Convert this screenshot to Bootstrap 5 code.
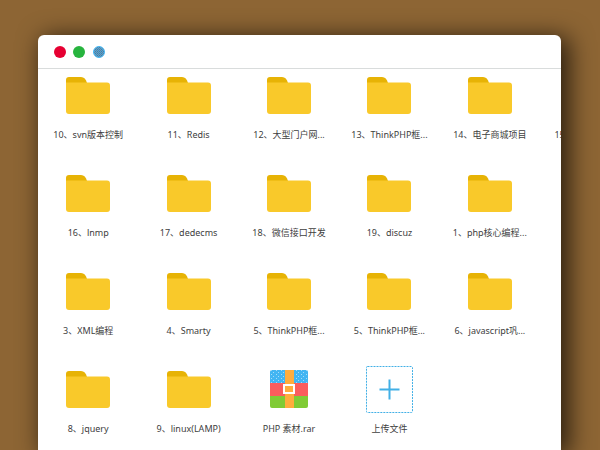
<!DOCTYPE html>
<html lang="zh-CN">
<head>
<meta charset="utf-8">
<meta name="viewport" content="width=device-width, initial-scale=1">
<title>PHP 素材</title>
<link href="https://cdn.jsdelivr.net/npm/bootstrap@5.3.0/dist/css/bootstrap.min.css" rel="stylesheet">
<style>
body { background: #8d6534; color: #404040; font-family: "Noto Sans", "Noto Sans CJK SC", sans-serif; font-size: 9px; line-height: 14px; }
.desk { padding: 35px 39px 0 38px; }
.win { border-radius: 6px 6px 0 0; box-shadow: 6px 4px 24px 2px rgba(0, 0, 0, .7); }
.titlebar { height: 34px; padding-left: 16px; gap: 7px; border-bottom: 1px solid #d9dcdc; }
.dot { width: 12px; height: 12px; border-radius: 50%; background: #e60032; }
.dot-green { background: #27b43e; }
.dot-blue { background: conic-gradient(#5d7590 25%, #42a9e0 0 50%, #6f7f92 0 75%, #42a9e0 0) 0 0 / 2px 2px; border: 1px solid #42b3f0; margin-left: 1px; }
.files { padding-top: 1px; }
.file-row { height: 98px; }
.tile { flex: 0 0 19.2%; color: inherit; font-size: 9px; line-height: 14px; }
.pic { height: 50px; }
.pic svg { display: block; }
</style>
<script src="https://cdn.jsdelivr.net/npm/bootstrap@5.3.0/dist/js/bootstrap.bundle.min.js"></script>
</head>
<body class="vh-100 overflow-hidden">
<svg class="d-none" aria-hidden="true">
  <symbol id="folder" viewBox="0 0 44 37">
    <path fill="#e7b305" d="M0 14V3a3 3 0 0 1 3-3h12c3 0 5 2 6 6v8z"/>
    <path fill="#f9c92a" d="M0 5.500h41a3 3 0 0 1 3 3V34a3 3 0 0 1-3 3H3a3 3 0 0 1-3-3z"/>
  </symbol>
</svg>
<main class="desk d-flex flex-column h-100">
  <section class="win bg-white flex-grow-1 overflow-hidden d-flex flex-column">
    <header class="titlebar d-flex align-items-center flex-shrink-0">
      <button type="button" class="dot border-0 p-0" aria-label="关闭"></button>
      <button type="button" class="dot dot-green border-0 p-0" aria-label="最大化"></button>
      <button type="button" class="dot dot-blue p-0" aria-label="最小化"></button>
    </header>
    <div class="files">
      <div class="file-row d-flex">
        <a href="#" class="tile text-decoration-none text-center text-nowrap"><span class="pic d-flex justify-content-center align-items-center"><svg width="44" height="37"><use href="#folder"/></svg></span><span class="d-block pt-2">10、svn版本控制</span></a>
        <a href="#" class="tile text-decoration-none text-center text-nowrap"><span class="pic d-flex justify-content-center align-items-center"><svg width="44" height="37"><use href="#folder"/></svg></span><span class="d-block pt-2">11、Redis</span></a>
        <a href="#" class="tile text-decoration-none text-center text-nowrap"><span class="pic d-flex justify-content-center align-items-center"><svg width="44" height="37"><use href="#folder"/></svg></span><span class="d-block pt-2">12、大型门户网...</span></a>
        <a href="#" class="tile text-decoration-none text-center text-nowrap"><span class="pic d-flex justify-content-center align-items-center"><svg width="44" height="37"><use href="#folder"/></svg></span><span class="d-block pt-2">13、ThinkPHP框...</span></a>
        <a href="#" class="tile text-decoration-none text-center text-nowrap"><span class="pic d-flex justify-content-center align-items-center"><svg width="44" height="37"><use href="#folder"/></svg></span><span class="d-block pt-2">14、电子商城项目</span></a>
        <a href="#" class="tile text-decoration-none text-center text-nowrap"><span class="pic d-flex justify-content-center align-items-center"><svg width="44" height="37"><use href="#folder"/></svg></span><span class="d-block pt-2">15、电子商城项...</span></a>
      </div>
      <div class="file-row d-flex">
        <a href="#" class="tile text-decoration-none text-center text-nowrap"><span class="pic d-flex justify-content-center align-items-center"><svg width="44" height="37"><use href="#folder"/></svg></span><span class="d-block pt-2">16、lnmp</span></a>
        <a href="#" class="tile text-decoration-none text-center text-nowrap"><span class="pic d-flex justify-content-center align-items-center"><svg width="44" height="37"><use href="#folder"/></svg></span><span class="d-block pt-2">17、dedecms</span></a>
        <a href="#" class="tile text-decoration-none text-center text-nowrap"><span class="pic d-flex justify-content-center align-items-center"><svg width="44" height="37"><use href="#folder"/></svg></span><span class="d-block pt-2">18、微信接口开发</span></a>
        <a href="#" class="tile text-decoration-none text-center text-nowrap"><span class="pic d-flex justify-content-center align-items-center"><svg width="44" height="37"><use href="#folder"/></svg></span><span class="d-block pt-2">19、discuz</span></a>
        <a href="#" class="tile text-decoration-none text-center text-nowrap"><span class="pic d-flex justify-content-center align-items-center"><svg width="44" height="37"><use href="#folder"/></svg></span><span class="d-block pt-2">1、php核心编程...</span></a>
      </div>
      <div class="file-row d-flex">
        <a href="#" class="tile text-decoration-none text-center text-nowrap"><span class="pic d-flex justify-content-center align-items-center"><svg width="44" height="37"><use href="#folder"/></svg></span><span class="d-block pt-2">3、XML编程</span></a>
        <a href="#" class="tile text-decoration-none text-center text-nowrap"><span class="pic d-flex justify-content-center align-items-center"><svg width="44" height="37"><use href="#folder"/></svg></span><span class="d-block pt-2">4、Smarty</span></a>
        <a href="#" class="tile text-decoration-none text-center text-nowrap"><span class="pic d-flex justify-content-center align-items-center"><svg width="44" height="37"><use href="#folder"/></svg></span><span class="d-block pt-2">5、ThinkPHP框...</span></a>
        <a href="#" class="tile text-decoration-none text-center text-nowrap"><span class="pic d-flex justify-content-center align-items-center"><svg width="44" height="37"><use href="#folder"/></svg></span><span class="d-block pt-2">5、ThinkPHP框...</span></a>
        <a href="#" class="tile text-decoration-none text-center text-nowrap"><span class="pic d-flex justify-content-center align-items-center"><svg width="44" height="37"><use href="#folder"/></svg></span><span class="d-block pt-2">6、javascript巩...</span></a>
      </div>
      <div class="file-row d-flex">
        <a href="#" class="tile text-decoration-none text-center text-nowrap"><span class="pic d-flex justify-content-center align-items-center"><svg width="44" height="37"><use href="#folder"/></svg></span><span class="d-block pt-2">8、jquery</span></a>
        <a href="#" class="tile text-decoration-none text-center text-nowrap"><span class="pic d-flex justify-content-center align-items-center"><svg width="44" height="37"><use href="#folder"/></svg></span><span class="d-block pt-2">9、linux(LAMP)</span></a>
        <a href="#" class="tile text-decoration-none text-center text-nowrap"><span class="pic d-flex justify-content-center align-items-center"><svg width="38" height="38" viewBox="0 0 38 38">
          <defs>
            <clipPath id="books"><rect width="38" height="38" rx="2"/></clipPath>
            <pattern id="specks" width="5" height="4" patternUnits="userSpaceOnUse"><path fill="#a5dbf7" d="M1 0h1v1H1zM3 2h1v1H3z"/></pattern>
          </defs>
          <g clip-path="url(#books)">
            <path fill="#42b5f2" d="M0 0h38v13H0z"/><path fill="url(#specks)" d="M0 0h38v13H0z"/>
            <path fill="#fa5d5d" d="M0 13h38v13H0z"/><path fill="#80cb35" d="M0 26h38v12H0z"/>
            <path fill="#ffad3d" d="M15 0h9v38h-9z"/>
          </g>
          <path fill="#ffad3d" stroke="#fff" stroke-width="2" d="M14 15h10v8H14z"/>
        </svg></span><span class="d-block pt-2">PHP 素材.rar</span></a>
        <button type="button" class="tile bg-transparent border-0 p-0 d-block text-center align-self-start"><span class="pic d-flex justify-content-center align-items-center"><svg width="47" height="47" viewBox="0 0 47 47" fill="none" stroke="#42b0e6">
          <rect x=".5" y=".5" width="46" height="46" rx="1" stroke-dasharray="2 1"/>
          <path stroke-width="2" d="M23.500 13.500v20M13.500 23.500h20"/>
        </svg></span><span class="d-block pt-2">上传文件</span></button>
      </div>
    </div>
  </section>
</main>
</body>
</html>
